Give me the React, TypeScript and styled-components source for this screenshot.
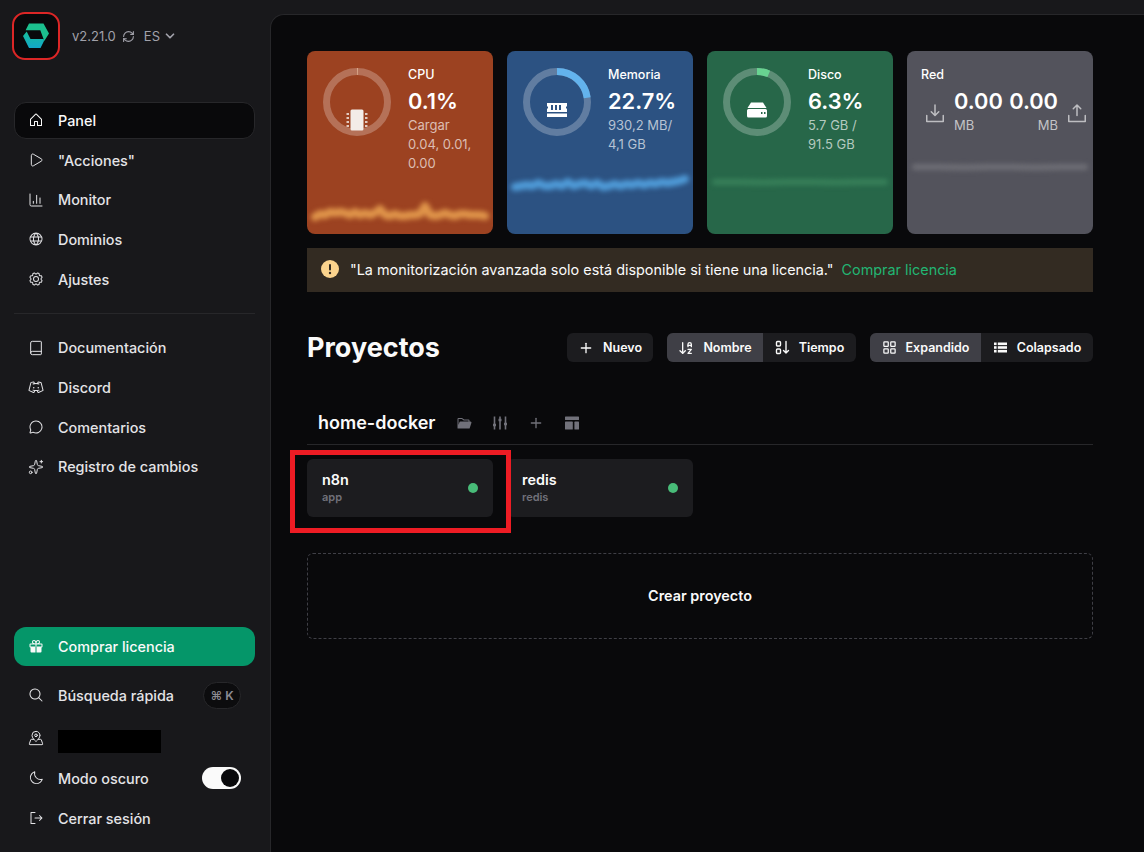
import React from 'react';
import styled, { createGlobalStyle } from 'styled-components';
import {
  ArrowDownAZ,
  Book,
  ChartColumn,
  LayoutGrid,
  MapPinned,
  Play,
  Plus,
  RefreshCw,
  ChevronDown,
  Sparkles,
} from 'lucide-react';
import {
  PiHouse,
  PiGlobe,
  PiGear,
  PiDiscordLogo,
  PiChatCircle,
  PiGiftFill,
  PiMagnifyingGlass,
  PiMoon,
  PiSignOut,
  PiDownloadSimple,
  PiUploadSimple,
  PiFolderOpenFill,
} from 'react-icons/pi';

const GlobalStyle = createGlobalStyle`
  html, body {
    margin: 0;
    height: 100%;
    background: #18181b;
    font-family: Inter, "Liberation Sans", sans-serif;
    overflow: hidden;
  }
  * { box-sizing: border-box; }
`;

const Page = styled.div`
  display: flex;
  width: 1144px;
  height: 852px;
  background: #18181b;
`;

const SideBar = styled.aside`
  display: flex;
  flex-direction: column;
  width: 270px;
  height: 852px;
  padding: 12px 15px 14px 14px;
  flex-shrink: 0;
`;

const Brand = styled.div`
  display: flex;
  align-items: center;
  margin-left: -2px;
  margin-bottom: 41.5px;
  color: #a1a1aa;
  font-size: 13px;
`;

const LogoBox = styled.div`
  display: flex;
  align-items: center;
  justify-content: center;
  width: 48px;
  height: 48px;
  background: #09090b;
  border: 2px solid #dc2626;
  border-radius: 13px;
  margin-right: 12px;
`;

const Version = styled.span`
  margin-right: 6px;
`;

const Lang = styled.span`
  display: flex;
  align-items: center;
  gap: 3px;
  margin-left: 9px;
`;

const NavGroup = styled.nav`
  display: flex;
  flex-direction: column;
  gap: 2px;
`;

const NavItem = styled.a<{ $active?: boolean; $buy?: boolean }>`
  display: flex;
  align-items: center;
  gap: 14px;
  height: 37.7px;
  padding-left: 13px;
  border-radius: 12px;
  font-size: 14.4px;
  font-weight: 500;
  white-space: nowrap;
  color: ${(p) => (p.$active || p.$buy ? '#fafafa' : '#e4e4e7')};
  background: ${(p) => (p.$active ? '#09090b' : p.$buy ? '#059669' : 'transparent')};
  border: 1px solid ${(p) => (p.$active ? '#27272a' : 'transparent')};
  svg {
    width: 16px;
    height: 16px;
    flex-shrink: 0;
  }
`;

const Divider = styled.hr`
  width: 100%;
  height: 1px;
  margin: 15px 0 15px;
  border: 0;
  background: #27272a;
`;

const BottomGroup = styled.div`
  display: flex;
  flex-direction: column;
  margin-top: auto;
`;

const BuyItem = styled(NavItem)`
  height: 39px;
  margin-bottom: 9px;
`;

const UtilRow = styled(NavItem)<{ $extra?: number }>`
  height: 40px;
  padding-right: 13px;
  margin-bottom: ${(p) => p.$extra ?? 0}px;
`;

const Grow = styled.span`
  flex: 1;
`;

const Kbd = styled.kbd`
  display: flex;
  align-items: center;
  justify-content: center;
  width: 38px;
  height: 27px;
  border-radius: 14px;
  background: #0c0c0e;
  border: 1px solid #27272a;
  color: #8b8b93;
  font-family: Inter, sans-serif;
  font-size: 12px;
  font-weight: 600;
`;

const Redacted = styled.span`
  width: 103px;
  height: 23px;
  margin-top: 6px;
  background: #000;
`;

const Toggle = styled.span`
  display: flex;
  justify-content: flex-end;
  align-items: center;
  width: 39px;
  height: 22px;
  padding: 2px;
  border-radius: 11px;
  background: #fafafa;
  &::after {
    content: '';
    width: 18px;
    height: 18px;
    border-radius: 50%;
    background: #09090b;
  }
`;

const Main = styled.main`
  flex: 1;
  margin-top: 14px;
  padding: 36px 51px 0 36px;
  background: #09090b;
  border: 1px solid #27272a;
  border-width: 1px 0 0 1px;
  border-top-left-radius: 14px;
`;

const StatGrid = styled.div`
  display: grid;
  grid-template-columns: repeat(4, 186px);
  gap: 14px;
`;

const StatCard = styled.section<{ $bg: string }>`
  height: 183px;
  padding: 15px 0 0 16px;
  border-radius: 8px;
  background: ${(p) => p.$bg};
  color: #fff;
  overflow: hidden;
`;

const StatTop = styled.div`
  display: flex;
  gap: 17px;
`;

const RingWrap = styled.div`
  position: relative;
  width: 68px;
  height: 68px;
  margin-top: 2px;
  flex-shrink: 0;
  color: #fff;
`;

const RingIcon = styled.div<{ $y: number }>`
  position: absolute;
  left: 0;
  right: 0;
  top: ${(p) => p.$y}px;
  height: 22px;
  display: flex;
  align-items: center;
  justify-content: center;
  transform: translateY(-50%);
`;

const StatText = styled.div`
  display: flex;
  flex-direction: column;
`;

const StatTitle = styled.div`
  font-size: 12.5px;
  font-weight: 500;
  line-height: 18px;
`;

const RedTitle = styled(StatTitle)`
  margin-left: -2px;
`;

const StatValue = styled.div`
  font-size: 21.8px;
  font-weight: 600;
  line-height: 28px;
  margin-top: 3px;
  white-space: nowrap;
`;

const StatSub = styled.div`
  margin-top: 1px;
  font-size: 13px;
  line-height: 19px;
  color: rgba(255, 255, 255, 0.66);
  white-space: nowrap;
`;

const NetRow = styled.div`
  display: flex;
  align-items: center;
`;

const NetIcon = styled.div`
  display: flex;
  width: 24px;
  margin-top: 8px;
  color: rgba(255, 255, 255, 0.62);
`;

const NetValue = styled.div<{ $right?: boolean }>`
  display: flex;
  flex-direction: column;
  align-items: ${(p) => (p.$right ? 'flex-end' : 'flex-start')};
  width: 48px;
  margin: ${(p) => (p.$right ? '0 7px 0 8px' : '0 0 0 7px')};
`;

const SparkSvg = styled.svg<{ $top: number }>`
  display: block;
  width: 186px;
  height: 40px;
  margin: ${(p) => p.$top}px 0 0 -16px;
  overflow: visible;
  filter: blur(2.6px);
`;

const Alert = styled.div`
  display: flex;
  align-items: center;
  gap: 11px;
  height: 44px;
  margin-top: 14px;
  padding: 0 0 2px 14px;
  background: #332b22;
  color: #fafafa;
  font-size: 14.4px;
`;

const AlertLink = styled.a`
  color: #22b573;
  margin-left: -3px;
`;

const ProjectsHead = styled.div`
  display: flex;
  align-items: center;
  height: 29px;
  margin-top: 41px;
`;

const PageTitle = styled.h1`
  flex: 1;
  margin: 0;
  font-size: 27px;
  font-weight: 700;
  color: #fafafa;
`;

const Segment = styled.div`
  display: flex;
  height: 29px;
  margin-left: 14px;
  border-radius: 6px;
  overflow: hidden;
  background: #1c1c1f;
`;

const SegButton = styled.button<{ $on?: boolean; $w: number }>`
  display: flex;
  align-items: center;
  justify-content: center;
  gap: 9px;
  width: ${(p) => p.$w}px;
  height: 29px;
  padding: 0;
  border: 0;
  background: ${(p) => (p.$on ? '#3f3f46' : 'transparent')};
  color: #fafafa;
  font-family: inherit;
  font-size: 12.5px;
  font-weight: 600;
  svg {
    flex-shrink: 0;
  }
`;

const GroupHead = styled.div`
  display: flex;
  align-items: flex-start;
  height: 56px;
  margin-top: 27px;
  padding: 22px 0 0 11px;
  border-bottom: 1px solid #27272a;
`;

const GroupName = styled.h2`
  margin: 0 20px 0 0;
  font-size: 18px;
  line-height: 24px;
  font-weight: 600;
  color: #fafafa;
`;

const GroupTools = styled.div`
  display: flex;
  align-items: center;
  gap: 20px;
  height: 23px;
  color: #71717a;
`;

const ToolSlot = styled.span`
  display: flex;
  width: 16px;
  height: 16px;
  align-items: center;
  justify-content: center;
`;

const ServiceGrid = styled.div`
  display: grid;
  grid-template-columns: repeat(4, 186px);
  gap: 14px;
  margin-top: 14px;
`;

const ServiceCard = styled.div`
  position: relative;
  display: flex;
  align-items: center;
  justify-content: space-between;
  height: 58px;
  padding: 0 15px;
  border-radius: 6px;
  background: #1c1c1f;
`;

const ServiceName = styled.div`
  font-size: 14.4px;
  font-weight: 600;
  line-height: 18px;
  color: #fafafa;
`;

const ServiceSub = styled.div`
  font-size: 11px;
  font-weight: 600;
  line-height: 16px;
  color: #71717a;
`;

const StatusDot = styled.span`
  width: 10px;
  height: 10px;
  border-radius: 50%;
  background: #48bb78;
`;

const Annotation = styled.div`
  position: absolute;
  z-index: 1;
  left: -17px;
  top: -9px;
  width: 221px;
  height: 83px;
  border: 5px solid #ed1c24;
  pointer-events: none;
`;

const CreateBox = styled.div`
  display: flex;
  align-items: center;
  justify-content: center;
  height: 86px;
  margin-top: 36px;
  padding-bottom: 2px;
  border: 1px dashed #3f3f46;
  border-radius: 6px;
  color: #fafafa;
  font-size: 14.4px;
  font-weight: 600;
`;

function Logo() {
  return (
    <svg width="26" height="26" viewBox="0 0 26 26">
      <defs>
        <linearGradient id="logoTeal" x1="0" y1="0" x2="0" y2="1">
          <stop offset="0" stopColor="#17bd98" />
          <stop offset="1" stopColor="#12a8c9" />
        </linearGradient>
      </defs>
      <path d="M6 0.5H20.5L26 10.5L21.3 18L17.3 7.3H2.6Z" fill="#1cc08e" />
      <path d="M0 13L3.7 8.5L7.5 16H20.7L21 18L17.5 25H6Z" fill="url(#logoTeal)" />
    </svg>
  );
}

function Ring({ pct, color }: { pct: number; color: string }) {
  const r = 30.5;
  const c = 2 * Math.PI * r;
  return (
    <svg width="68" height="68" viewBox="0 0 68 68">
      <circle cx="34" cy="34" r={r} fill="none" stroke="rgba(255,255,255,0.25)" strokeWidth="7" />
      <circle
        cx="34"
        cy="34"
        r={r}
        fill="none"
        stroke={color}
        strokeWidth="7"
        strokeDasharray={`${(c * pct) / 100} ${c}`}
        transform="rotate(-90 34 34)"
      />
    </svg>
  );
}

function ChipIcon() {
  return (
    <svg width="22" height="22" viewBox="0 0 22 22" fill="#f3ece8">
      <rect x="4.5" y="0.5" width="13" height="21" rx="1.5" />
      {[5, 9, 13, 17].map((y) => (
        <React.Fragment key={y}>
          <rect x="0.5" y={y - 0.8} width="2.5" height="1.6" />
          <rect x="19" y={y - 0.8} width="2.5" height="1.6" />
        </React.Fragment>
      ))}
    </svg>
  );
}

function RamIcon() {
  return (
    <svg width="22" height="16" viewBox="0 0 22 16" fill="#fff">
      <path
        fillRule="evenodd"
        d="M1 1H21V4.5H20V6.5H21V10H1V6.5H2V4.5H1ZM5 3V8H7V3ZM9 3V8H11V3ZM13 3V8H15V3Z"
      />
      <path d="M1 11.5H21V15H1Z" />
    </svg>
  );
}

function DiskIcon() {
  return (
    <svg width="22" height="16" viewBox="0 0 22 16" fill="#fff">
      <path d="M5 0.5H17L20.5 6H1.5Z" />
      <path
        fillRule="evenodd"
        d="M2.5 7H19.5A1.5 1.5 0 0 1 21 8.5V14A1.5 1.5 0 0 1 19.5 15.5H2.5A1.5 1.5 0 0 1 1 14V8.5A1.5 1.5 0 0 1 2.5 7ZM15 10V12H16.5V10ZM18 10V12H19.5V10Z"
      />
    </svg>
  );
}

function Spark({ top, color, points, width = 5 }: { top: number; color: string; points: number[]; width?: number }) {
  const step = 170 / (points.length - 1);
  const line = points.map((y, i) => `${8 + i * step},${y}`).join(' ');
  return (
    <SparkSvg $top={top} viewBox="0 0 186 40">
      <polyline points={line} fill="none" stroke={color} strokeWidth={width} strokeLinecap="round" strokeLinejoin="round" />
    </SparkSvg>
  );
}

function TimeSortIcon() {
  return (
    <svg width="15" height="15" viewBox="0 0 15 15" fill="none" stroke="#fafafa" strokeWidth="1.4">
      <rect x="1.5" y="1.5" width="4" height="4.5" rx="1" />
      <rect x="1.5" y="9" width="4" height="4.5" rx="1" />
      <path d="M11 1.5V13M8.5 10.5L11 13L13.5 10.5" strokeLinecap="round" strokeLinejoin="round" />
    </svg>
  );
}

function ListIcon() {
  return (
    <svg width="15" height="15" viewBox="0 0 15 15" fill="#fafafa">
      <rect x="1" y="2.5" width="2.6" height="2.6" />
      <rect x="1" y="6.2" width="2.6" height="2.6" />
      <rect x="1" y="9.9" width="2.6" height="2.6" />
      <rect x="4.8" y="2.5" width="9.2" height="2.6" />
      <rect x="4.8" y="6.2" width="9.2" height="2.6" />
      <rect x="4.8" y="9.9" width="9.2" height="2.6" />
    </svg>
  );
}

function SlidersIcon() {
  return (
    <svg width="16" height="16" viewBox="0 0 16 16" fill="none" stroke="#71717a" strokeWidth="1.6">
      <path d="M2.5 1.5V14.5M8 1.5V14.5M13.5 1.5V14.5" />
      <path d="M1 10H4M6.5 5H9.5M12 9H15" strokeWidth="2.4" />
    </svg>
  );
}

function LayoutIcon() {
  return (
    <svg width="16" height="16" viewBox="0 0 16 16" fill="#71717a">
      <rect x="1" y="1.5" width="14" height="3.6" rx="0.6" />
      <rect x="1" y="6.6" width="7.8" height="8" rx="0.6" />
      <rect x="10.4" y="6.6" width="4.6" height="8" rx="0.6" />
    </svg>
  );
}

const cpuLine = [23, 20, 21, 18, 19, 18, 19, 21, 18, 21, 19, 21, 19, 15, 21, 22, 20, 22, 22, 21, 21, 20, 12, 21, 22, 21, 19, 21, 22, 20, 20, 21, 21, 21, 22];
const memLine = [22, 21, 20, 21, 18, 21, 21, 19, 21, 17, 21, 19, 18, 21, 18, 22, 21, 19, 21, 19, 20, 18, 20, 18, 19, 17, 18, 17, 16, 14];
const flatLine = [20, 20, 20.5, 20, 20, 20.5, 20, 20];

export default function App() {
  return (
    <>
      <GlobalStyle />
      <Page>
        <SideBar>
          <Brand>
            <LogoBox>
              <Logo />
            </LogoBox>
            <Version>v2.21.0</Version>
            <RefreshCw size={13} />
            <Lang>
              ES
              <ChevronDown size={14} strokeWidth={3} />
            </Lang>
          </Brand>
          <NavGroup>
            <NavItem $active>
              <PiHouse />
              Panel
            </NavItem>
            <NavItem>
              <Play strokeWidth={1.5} />
              "Acciones"
            </NavItem>
            <NavItem>
              <ChartColumn strokeWidth={1.5} />
              Monitor
            </NavItem>
            <NavItem>
              <PiGlobe />
              Dominios
            </NavItem>
            <NavItem>
              <PiGear />
              Ajustes
            </NavItem>
          </NavGroup>
          <Divider />
          <NavGroup>
            <NavItem>
              <Book strokeWidth={1.5} />
              Documentación
            </NavItem>
            <NavItem>
              <PiDiscordLogo />
              Discord
            </NavItem>
            <NavItem>
              <PiChatCircle />
              Comentarios
            </NavItem>
            <NavItem>
              <Sparkles strokeWidth={1.5} />
              Registro de cambios
            </NavItem>
          </NavGroup>
          <BottomGroup>
            <BuyItem $buy>
              <PiGiftFill />
              Comprar licencia
            </BuyItem>
            <UtilRow $extra={3}>
              <PiMagnifyingGlass />
              Búsqueda rápida
              <Grow />
              <Kbd>⌘ K</Kbd>
            </UtilRow>
            <UtilRow>
              <MapPinned strokeWidth={1.5} />
              <Redacted />
            </UtilRow>
            <UtilRow>
              <PiMoon />
              Modo oscuro
              <Grow />
              <Toggle />
            </UtilRow>
            <UtilRow>
              <PiSignOut />
              Cerrar sesión
            </UtilRow>
          </BottomGroup>
        </SideBar>
        <Main>
          <StatGrid>
            <StatCard $bg="#9c4221">
              <StatTop>
                <RingWrap>
                  <Ring pct={0.3} color="#f0c9a8" />
                  <RingIcon $y={52}>
                    <ChipIcon />
                  </RingIcon>
                </RingWrap>
                <StatText>
                  <StatTitle>CPU</StatTitle>
                  <StatValue>0.1%</StatValue>
                  <StatSub>
                    Cargar
                    <br />
                    0.04, 0.01,
                    <br />
                    0.00
                  </StatSub>
                </StatText>
              </StatTop>
              <Spark top={21} color="#e0954a" points={cpuLine} width={8} />
            </StatCard>
            <StatCard $bg="#2c5282">
              <StatTop>
                <RingWrap>
                  <Ring pct={22.7} color="#63b3ed" />
                  <RingIcon $y={42}>
                    <RamIcon />
                  </RingIcon>
                </RingWrap>
                <StatText>
                  <StatTitle>Memoria</StatTitle>
                  <StatValue>22.7%</StatValue>
                  <StatSub>
                    930,2 MB/
                    <br />
                    4,1 GB
                  </StatSub>
                </StatText>
              </StatTop>
              <Spark top={11} color="#4f9bd8" points={memLine} width={8} />
            </StatCard>
            <StatCard $bg="#276749">
              <StatTop>
                <RingWrap>
                  <Ring pct={6.3} color="#68d391" />
                  <RingIcon $y={42}>
                    <DiskIcon />
                  </RingIcon>
                </RingWrap>
                <StatText>
                  <StatTitle>Disco</StatTitle>
                  <StatValue>6.3%</StatValue>
                  <StatSub>
                    5.7 GB /
                    <br />
                    91.5 GB
                  </StatSub>
                </StatText>
              </StatTop>
              <Spark top={8} color="#38815a" points={flatLine} width={6} />
            </StatCard>
            <StatCard $bg="#53535c">
              <RedTitle>Red</RedTitle>
              <NetRow>
                <NetIcon>
                  <PiDownloadSimple size={24} />
                </NetIcon>
                <NetValue>
                  <StatValue>0.00</StatValue>
                  <StatSub>MB</StatSub>
                </NetValue>
                <NetValue $right>
                  <StatValue>0.00</StatValue>
                  <StatSub>MB</StatSub>
                </NetValue>
                <NetIcon>
                  <PiUploadSimple size={24} />
                </NetIcon>
              </NetRow>
              <Spark top={12} color="#6f6f76" points={flatLine} width={6} />
            </StatCard>
          </StatGrid>

          <Alert>
            <svg width="18" height="18" viewBox="0 0 18 18">
              <circle cx="9" cy="9" r="9" fill="#fbd38d" />
              <rect x="8" y="4" width="2" height="6.5" rx="1" fill="#332b22" />
              <circle cx="9" cy="13" r="1.2" fill="#332b22" />
            </svg>
            "La monitorización avanzada solo está disponible si tiene una licencia."
            <AlertLink>Comprar licencia</AlertLink>
          </Alert>

          <ProjectsHead>
            <PageTitle>Proyectos</PageTitle>
            <Segment>
              <SegButton $w={86}>
                <Plus size={16} />
                Nuevo
              </SegButton>
            </Segment>
            <Segment>
              <SegButton $on $w={96}>
                <ArrowDownAZ size={16} />
                Nombre
              </SegButton>
              <SegButton $w={93}>
                <TimeSortIcon />
                Tiempo
              </SegButton>
            </Segment>
            <Segment>
              <SegButton $on $w={111}>
                <LayoutGrid size={15} />
                Expandido
              </SegButton>
              <SegButton $w={112}>
                <ListIcon />
                Colapsado
              </SegButton>
            </Segment>
          </ProjectsHead>

          <GroupHead>
            <GroupName>home-docker</GroupName>
            <GroupTools>
              <ToolSlot>
                <PiFolderOpenFill size={16} />
              </ToolSlot>
              <ToolSlot>
                <SlidersIcon />
              </ToolSlot>
              <ToolSlot>
                <Plus size={16} />
              </ToolSlot>
              <ToolSlot>
                <LayoutIcon />
              </ToolSlot>
            </GroupTools>
          </GroupHead>

          <ServiceGrid>
            <ServiceCard>
              <div>
                <ServiceName>n8n</ServiceName>
                <ServiceSub>app</ServiceSub>
              </div>
              <StatusDot />
              <Annotation />
            </ServiceCard>
            <ServiceCard>
              <div>
                <ServiceName>redis</ServiceName>
                <ServiceSub>redis</ServiceSub>
              </div>
              <StatusDot />
            </ServiceCard>
          </ServiceGrid>

          <CreateBox>Crear proyecto</CreateBox>
        </Main>
      </Page>
    </>
  );
}
